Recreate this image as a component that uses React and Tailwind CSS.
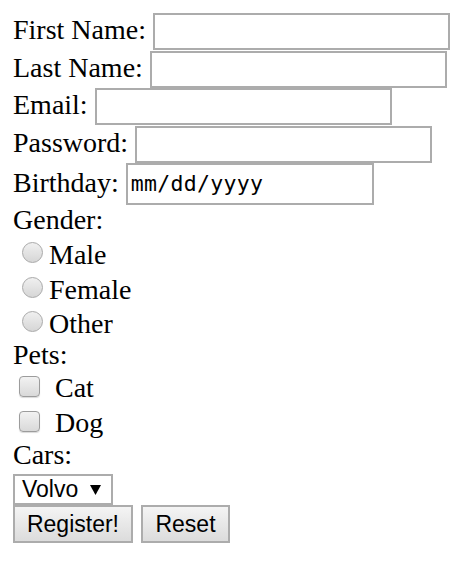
import React from "react";

const serif = "font-['Liberation_Serif',serif] text-[28px] text-black";

function TextInput({ w = "w-[297px]", h = "h-[37px]", children }) {
  return (
    <div
      className={`${w} ${h} ml-[7px] border-2 border-[#acacac] bg-white flex items-center`}
    >
      {children}
    </div>
  );
}

function Radio() {
  return (
    <span className="mt-[5px] ml-[9px] w-[21px] h-[21px] rounded-full border border-[#a9a9a9] bg-gradient-to-b from-[#f0f0f0] to-[#d6d6d6] shrink-0" />
  );
}

function Checkbox() {
  return (
    <span className="mt-[3px] ml-[6px] w-[21px] h-[21px] rounded-[4px] border border-[#9c9c9c] bg-gradient-to-b from-[#f2f2f2] to-[#d9d9d9] shadow-[0_1px_1px_rgba(0,0,0,0.15)] shrink-0" />
  );
}

export default function App() {
  return (
    <div className="bg-white w-[458px] h-[579px] pt-[13px] pl-[13px]">
      <div className={serif}>
        <div className="flex h-[38px] items-start">
          <span className="leading-[33px]">First Name:</span>
          <TextInput />
        </div>
        <div className="flex h-[37px] items-start">
          <span className="leading-[33px]">Last Name:</span>
          <TextInput />
        </div>
        <div className="flex h-[38px] items-start">
          <span className="leading-[33px]">Email:</span>
          <TextInput />
        </div>
        <div className="flex h-[37px] items-start">
          <span className="leading-[33px]">Password:</span>
          <TextInput />
        </div>
        <div className="flex h-[42px] items-start">
          <span className="leading-[39px]">Birthday:</span>
          <TextInput w="w-[248px]" h="h-[42px]">
            <span className="font-['DejaVu_Sans_Mono',monospace] text-[21.5px] pl-[3px] leading-none pb-[1px] tracking-[0.3px]">
              mm/dd/yyyy
            </span>
          </TextInput>
        </div>

        <div className="h-[32px] leading-[30px]">Gender:</div>
        <div className="flex h-[35px] items-start">
          <Radio />
          <span className="ml-[6px] leading-[35px]">Male</span>
        </div>
        <div className="flex h-[34px] items-start">
          <Radio />
          <span className="ml-[6px] leading-[35px]">Female</span>
        </div>
        <div className="flex h-[34px] items-start">
          <Radio />
          <span className="ml-[6px] leading-[35px]">Other</span>
        </div>

        <div className="h-[33px] leading-[29px]">Pets:</div>
        <div className="flex h-[35px] items-start">
          <Checkbox />
          <span className="ml-[15px] leading-[30px]">Cat</span>
        </div>
        <div className="flex h-[32px] items-start">
          <Checkbox />
          <span className="ml-[15px] leading-[30px]">Dog</span>
        </div>

        <div className="h-[34px] leading-[30px]">Cars:</div>
      </div>

      <div className="font-['Liberation_Sans',Arial,sans-serif] text-[23px] text-black">
        <div className="flex">
          <div className="w-[100px] h-[31px] border-2 border-[#acacac] bg-white flex items-center pl-[7px]">
            <span className="leading-none">Volvo</span>
            <svg className="ml-[12px]" width="11" height="10" viewBox="0 0 11 10">
              <polygon points="0,0 11,0 5.5,10" fill="#000" />
            </svg>
          </div>
        </div>
        <div className="flex gap-[8px] mt-0">
          <div className="w-[120px] h-[38px] border-2 border-[#acacac] bg-gradient-to-b from-[#f4f4f4] to-[#dcdcdc] flex items-center justify-center">
            <span className="leading-none">Register!</span>
          </div>
          <div className="w-[89px] h-[38px] border-2 border-[#acacac] bg-gradient-to-b from-[#f4f4f4] to-[#dcdcdc] flex items-center justify-center">
            <span className="leading-none">Reset</span>
          </div>
        </div>
      </div>
    </div>
  );
}
